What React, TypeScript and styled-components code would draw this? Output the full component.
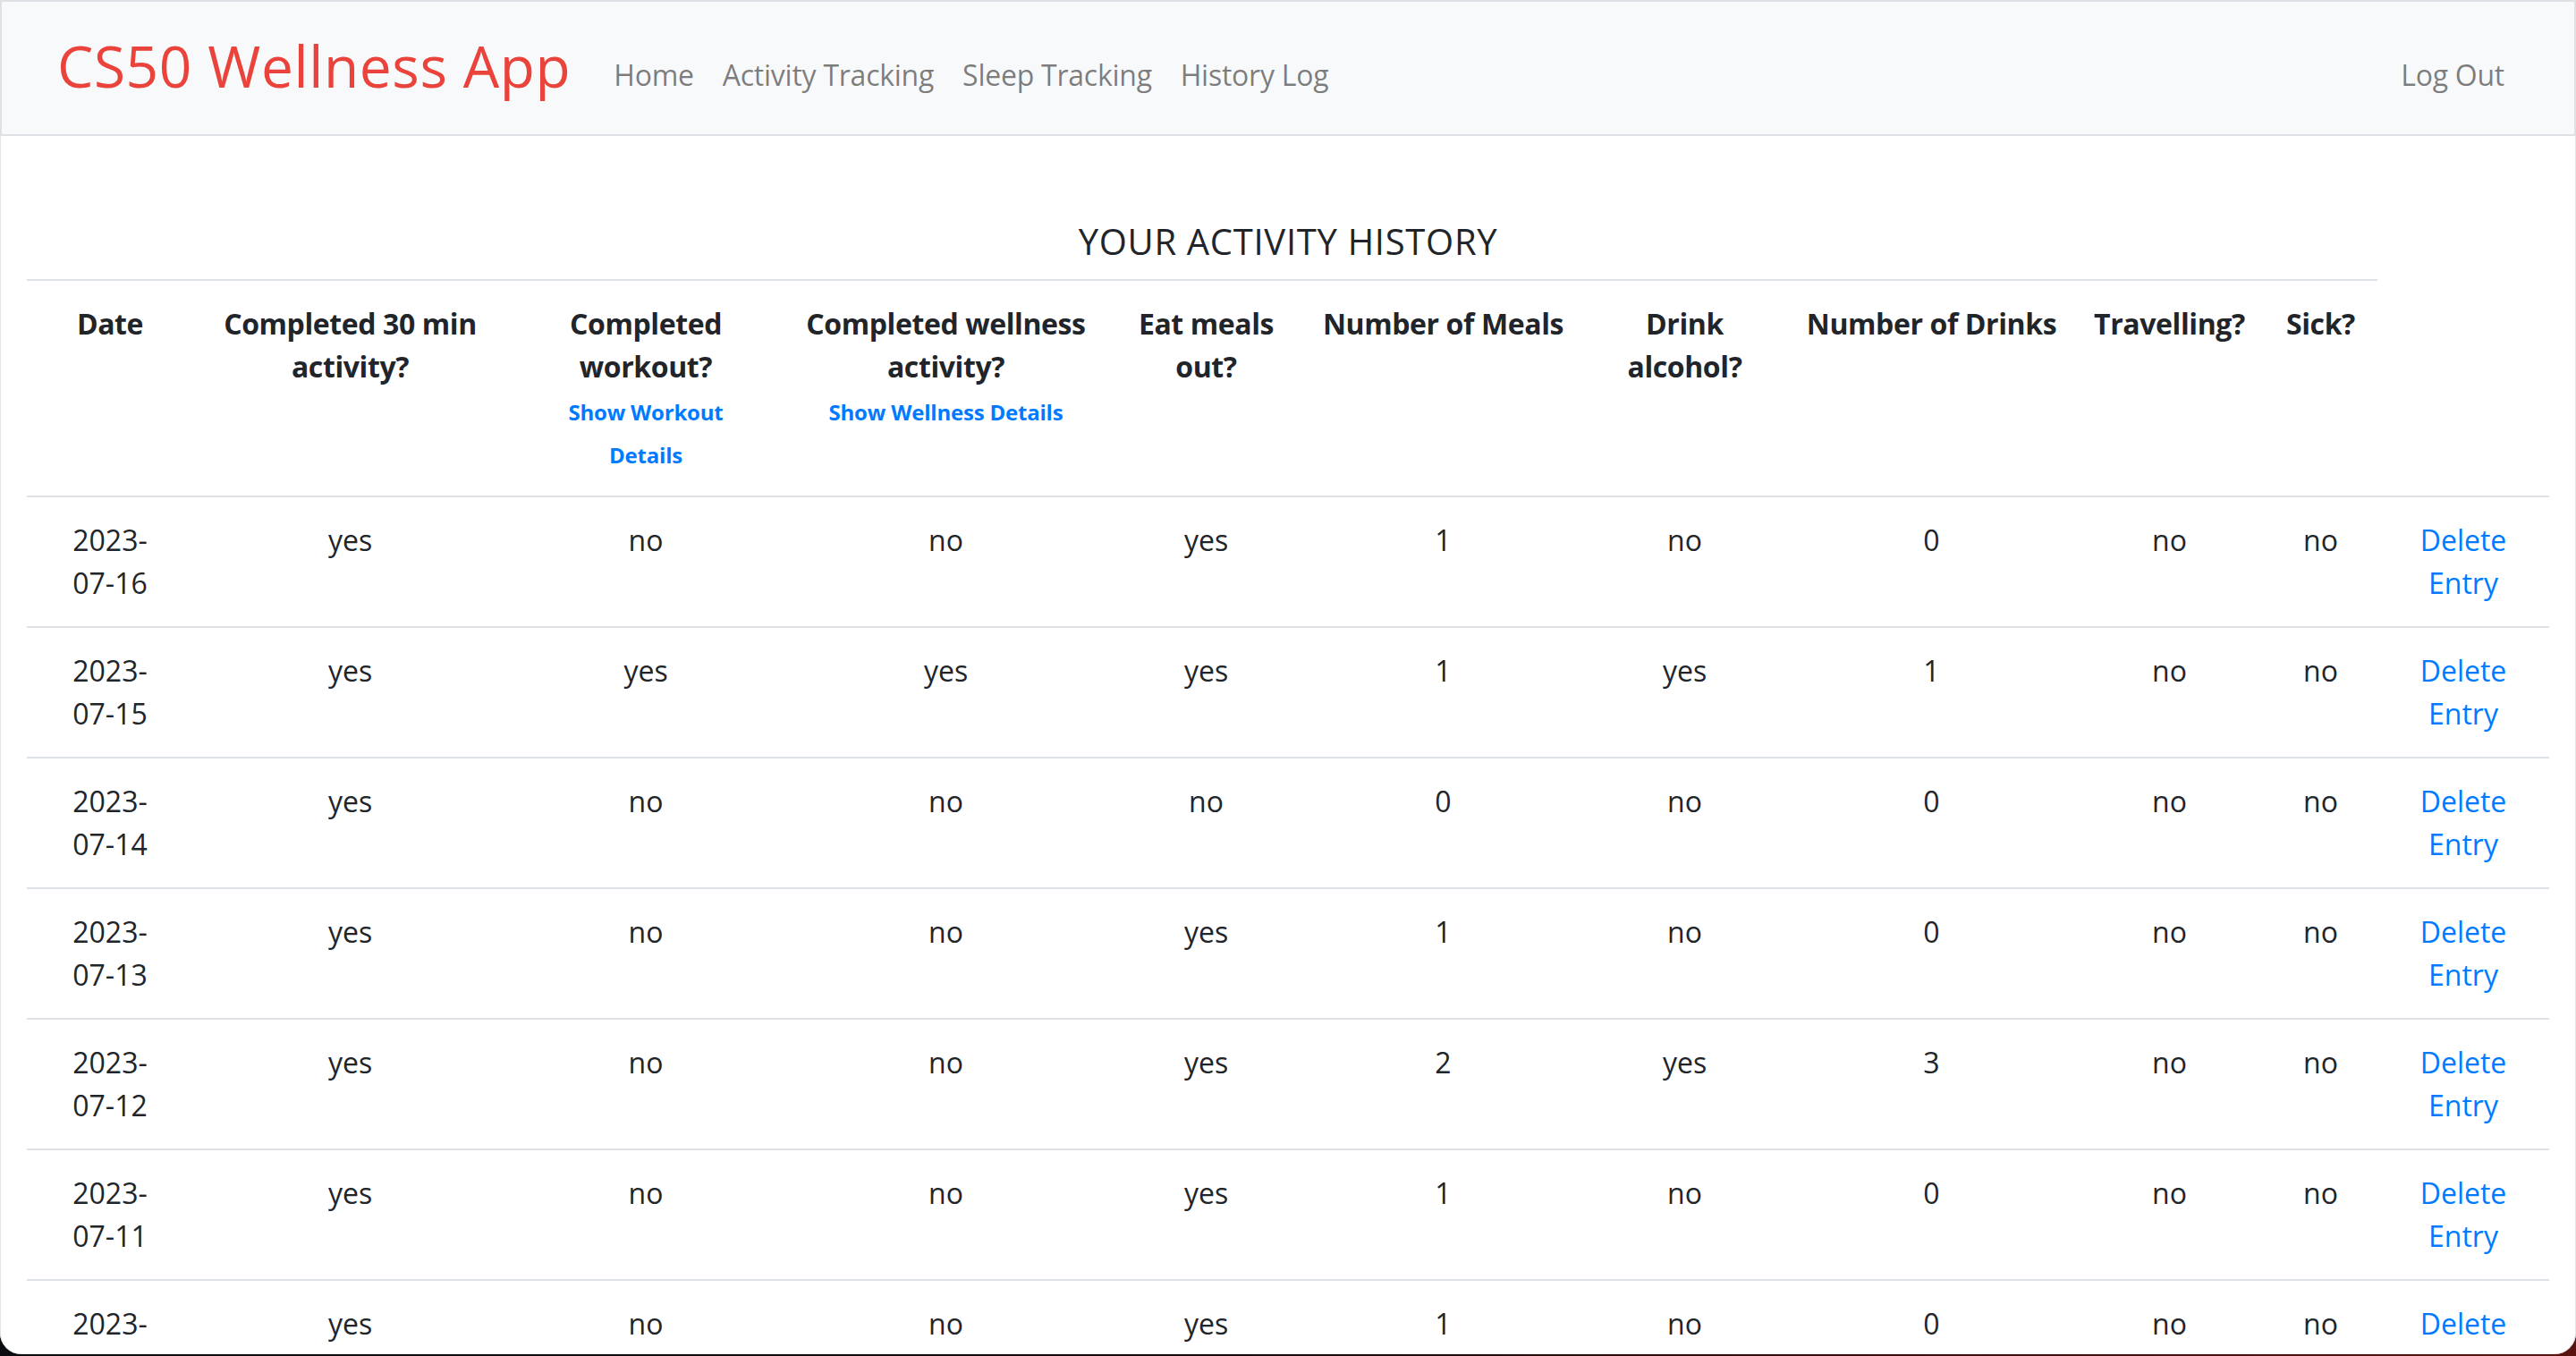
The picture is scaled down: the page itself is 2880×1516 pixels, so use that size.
import React from "react";
import styled, { createGlobalStyle } from "styled-components";

const GlobalStyle = createGlobalStyle`
  * { box-sizing: border-box; }
  html, body {
    margin: 0;
    padding: 0;
    height: 100%;
    overflow: hidden;
  }
  body {
    background: linear-gradient(90deg, #0a0c10 0%, #14090b 45%, #5a140f 100%);
    font-family: "Open Sans", "Noto Sans", "Liberation Sans", sans-serif;
    color: #212529;
  }
`;

const Window = styled.div`
  height: 1514px;
  background: #ffffff;
  border-radius: 0 0 24px 24px;
  overflow: hidden;
  box-shadow: inset 1px 0 #e3e5e8, inset -1px 0 #e3e5e8;
`;

const Navbar = styled.nav`
  display: flex;
  align-items: center;
  height: 152px;
  padding: 16px 62px;
  background: #f8f9fa;
  border: 2px solid #dee2e6;
`;

const Brand = styled.a`
  display: inline-block;
  padding: 8px 0 12px;
  margin-right: 32px;
  font-size: 64px;
  line-height: 96px;
  letter-spacing: 0.6px;
  color: #ea433b;
  text-decoration: none;
  white-space: nowrap;
`;

const NavList = styled.ul<{ $end?: boolean }>`
  display: flex;
  list-style: none;
  margin: 16px 0 0 ${(p) => (p.$end ? "auto" : "0")};
  padding: 0;
`;

const NavLink = styled.a`
  display: block;
  padding: 16px;
  font-size: 32px;
  line-height: 48px;
  letter-spacing: -0.25px;
  color: rgba(0, 0, 0, 0.5);
  text-decoration: none;
  white-space: nowrap;
`;

const Main = styled.main`
  padding: 94px 30px 0;
`;

const Title = styled.h2`
  margin: 0 0 18px;
  font-size: 40px;
  line-height: 48px;
  font-weight: 400;
  letter-spacing: 0.7px;
  text-align: center;
  color: #212529;
`;

const Table = styled.table`
  width: 100%;
  table-layout: fixed;
  border-collapse: separate;
  border-spacing: 0;
  font-size: 32px;
  line-height: 48px;
`;

const Col = styled.col<{ $w: number }>`
  width: ${(p) => p.$w}px;
`;

const Th = styled.th`
  padding: 24px 0;
  border-top: 2px solid #dee2e6;
  font-weight: 700;
  letter-spacing: -0.4px;
  text-align: center;
  vertical-align: top;
  white-space: nowrap;
  color: #212529;
`;

const Td = styled.td`
  padding: 24px;
  border-top: 2px solid #dee2e6;
  text-align: center;
  vertical-align: top;
  color: #212529;
`;

const DetailsLink = styled.a`
  font-size: 24px;
  line-height: 1;
  font-weight: 700;
  letter-spacing: -0.2px;
  color: #007bff;
  text-decoration: none;
`;

const DeleteLink = styled.a`
  color: #007bff;
  text-decoration: none;
`;

const widths = [186, 351, 310, 361, 221, 309, 231, 321, 211, 127, 192];

type Header = { lines: string[]; link?: string[] };

const headers: Header[] = [
  { lines: ["Date"] },
  { lines: ["Completed 30 min", "activity?"] },
  { lines: ["Completed", "workout?"], link: ["Show Workout", "Details"] },
  { lines: ["Completed wellness", "activity?"], link: ["Show Wellness Details"] },
  { lines: ["Eat meals", "out?"] },
  { lines: ["Number of Meals"] },
  { lines: ["Drink", "alcohol?"] },
  { lines: ["Number of Drinks"] },
  { lines: ["Travelling?"] },
  { lines: ["Sick?"] },
];

const rows: string[][] = [
  ["2023-07-16", "yes", "no", "no", "yes", "1", "no", "0", "no", "no"],
  ["2023-07-15", "yes", "yes", "yes", "yes", "1", "yes", "1", "no", "no"],
  ["2023-07-14", "yes", "no", "no", "no", "0", "no", "0", "no", "no"],
  ["2023-07-13", "yes", "no", "no", "yes", "1", "no", "0", "no", "no"],
  ["2023-07-12", "yes", "no", "no", "yes", "2", "yes", "3", "no", "no"],
  ["2023-07-11", "yes", "no", "no", "yes", "1", "no", "0", "no", "no"],
  ["2023-07-10", "yes", "no", "no", "yes", "1", "no", "0", "no", "no"],
];

const Lines = ({ lines }: { lines: string[] }) => (
  <>
    {lines.map((l, i) => (
      <React.Fragment key={i}>
        {i > 0 && <br />}
        {l}
      </React.Fragment>
    ))}
  </>
);

export default function App() {
  return (
    <>
      <GlobalStyle />
      <Window>
        <Navbar>
          <Brand href="#">CS50 Wellness App</Brand>
          <NavList>
            <li><NavLink href="#">Home</NavLink></li>
            <li><NavLink href="#">Activity Tracking</NavLink></li>
            <li><NavLink href="#">Sleep Tracking</NavLink></li>
            <li><NavLink href="#">History Log</NavLink></li>
          </NavList>
          <NavList $end>
            <li><NavLink href="#">Log Out</NavLink></li>
          </NavList>
        </Navbar>
        <Main>
          <Title>YOUR ACTIVITY HISTORY</Title>
          <Table>
            <colgroup>
              {widths.map((w, i) => (
                <Col key={i} $w={w} />
              ))}
            </colgroup>
            <thead>
              <tr>
                {headers.map((h, i) => (
                  <Th key={i}>
                    <Lines lines={h.lines} />
                    {h.link && (
                      <>
                        <br />
                        <DetailsLink href="#">
                          <Lines lines={h.link} />
                        </DetailsLink>
                      </>
                    )}
                  </Th>
                ))}
              </tr>
            </thead>
            <tbody>
              {rows.map((r, ri) => (
                <tr key={ri}>
                  <Td>
                    {r[0].slice(0, 5)}
                    <br />
                    {r[0].slice(5)}
                  </Td>
                  {r.slice(1).map((c, ci) => (
                    <Td key={ci}>{c}</Td>
                  ))}
                  <Td>
                    <DeleteLink href="#">Delete Entry</DeleteLink>
                  </Td>
                </tr>
              ))}
            </tbody>
          </Table>
        </Main>
      </Window>
    </>
  );
}
